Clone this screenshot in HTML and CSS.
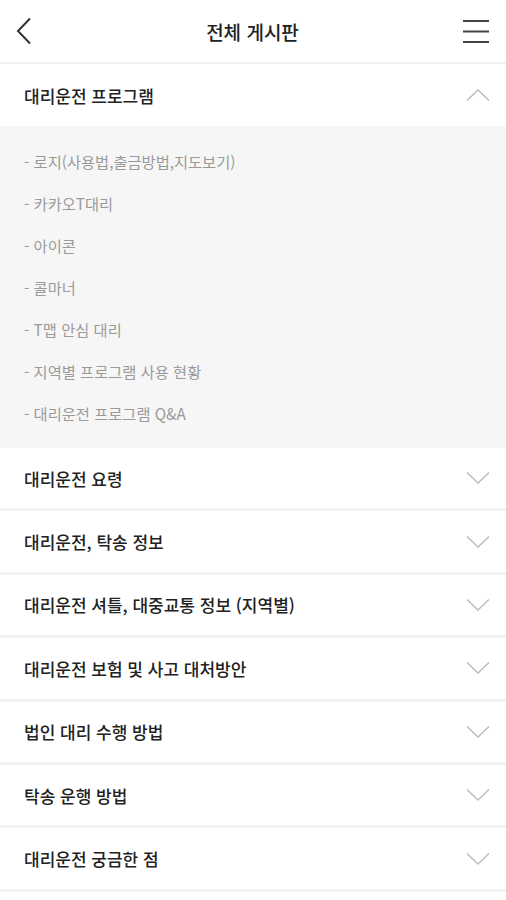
FILE: index.html
```html
<!DOCTYPE html>
<html lang="ko">
<head>
  <meta charset="UTF-8" />
  <meta name="viewport" content="width=device-width, initial-scale=1.0"/>
  <title>전체 게시판</title>
  <link rel="stylesheet" href="styles.css">
</head>
<body>

  <!-- Top bar -->
  <div class="topbar">
    <button class="icon-btn back">
      <svg width="18" height="28" viewBox="0 0 18 28"><path d="M15 1.5 L3 14 L15 26.5" fill="none" stroke="#333" stroke-width="2"/></svg>
    </button>
    <div class="title">전체 게시판</div>
    <button class="icon-btn menu">
      <svg width="28" height="24" viewBox="0 0 28 24"><path d="M1 2 H27 M1 12.5 H27 M1 23 H27" fill="none" stroke="#444" stroke-width="2"/></svg>
    </button>
  </div>

  <!-- Board categories -->
  <ul class="board-list">
    <li class="board open">
      <div class="board-head">
        <span>대리운전 프로그램</span>
        <svg class="arrow" width="24" height="14" viewBox="0 0 24 14"><path d="M1 12.5 L12 2 L23 12.5" fill="none" stroke="#bbb" stroke-width="1.4"/></svg>
      </div>
      <ul class="sub-list">
        <li>- 로지(사용법,출금방법,지도보기)</li>
        <li>- 카카오T대리</li>
        <li>- 아이콘</li>
        <li>- 콜마너</li>
        <li>- T맵 안심 대리</li>
        <li>- 지역별 프로그램 사용 현황</li>
        <li>- 대리운전 프로그램 Q&amp;A</li>
      </ul>
    </li>
    <li class="board"><div class="board-head"><span>대리운전 요령</span><svg class="arrow" width="24" height="14" viewBox="0 0 24 14"><path d="M1 1.5 L12 12 L23 1.5" fill="none" stroke="#bbb" stroke-width="1.4"/></svg></div></li>
    <li class="board"><div class="board-head"><span>대리운전, 탁송 정보</span><svg class="arrow" width="24" height="14" viewBox="0 0 24 14"><path d="M1 1.5 L12 12 L23 1.5" fill="none" stroke="#bbb" stroke-width="1.4"/></svg></div></li>
    <li class="board"><div class="board-head"><span>대리운전 셔틀, 대중교통 정보 (지역별)</span><svg class="arrow" width="24" height="14" viewBox="0 0 24 14"><path d="M1 1.5 L12 12 L23 1.5" fill="none" stroke="#bbb" stroke-width="1.4"/></svg></div></li>
    <li class="board"><div class="board-head"><span>대리운전 보험 및 사고 대처방안</span><svg class="arrow" width="24" height="14" viewBox="0 0 24 14"><path d="M1 1.5 L12 12 L23 1.5" fill="none" stroke="#bbb" stroke-width="1.4"/></svg></div></li>
    <li class="board"><div class="board-head"><span>법인 대리 수행 방법</span><svg class="arrow" width="24" height="14" viewBox="0 0 24 14"><path d="M1 1.5 L12 12 L23 1.5" fill="none" stroke="#bbb" stroke-width="1.4"/></svg></div></li>
    <li class="board"><div class="board-head"><span>탁송 운행 방법</span><svg class="arrow" width="24" height="14" viewBox="0 0 24 14"><path d="M1 1.5 L12 12 L23 1.5" fill="none" stroke="#bbb" stroke-width="1.4"/></svg></div></li>
    <li class="board"><div class="board-head"><span>대리운전 궁금한 점</span><svg class="arrow" width="24" height="14" viewBox="0 0 24 14"><path d="M1 1.5 L12 12 L23 1.5" fill="none" stroke="#bbb" stroke-width="1.4"/></svg></div></li>
  </ul>

</body>
</html>
```
FILE: styles.css
```css
body {
  margin: 0;
  background: #fff;
  font-family: "Noto Sans CJK KR", "Noto Sans", sans-serif;
  color: #222;
}

.topbar {
  height: 62px;
  display: grid;
  grid-template-columns: 1fr auto 1fr;
  align-items: center;
  padding: 0 16px 0 15px;
  border-bottom: 2px solid #f2f2f2;
}

.icon-btn {
  background: none;
  border: none;
  padding: 0;
  display: flex;
  cursor: pointer;
}

.menu {
  justify-self: end;
}

.title {
  font-size: 19px;
  font-weight: 500;
  color: #222;
}

ul {
  list-style: none;
  margin: 0;
  padding: 0;
}

.board {
  border-bottom: 3px solid #f2f2f2;
}

.board.open {
  border-bottom: none;
}

.board-head {
  height: 60.4px;
  display: flex;
  align-items: center;
  justify-content: space-between;
  padding: 0 16px 0 24px;
  font-size: 17px;
  font-weight: 500;
}

.board.open .board-head {
  height: 62px;
}

.sub-list {
  background: #f6f6f6;
  padding: 14px 24px;
}

.sub-list li {
  height: 42px;
  line-height: 42px;
  font-size: 15.3px;
  color: #9a9a9a;
}
```
